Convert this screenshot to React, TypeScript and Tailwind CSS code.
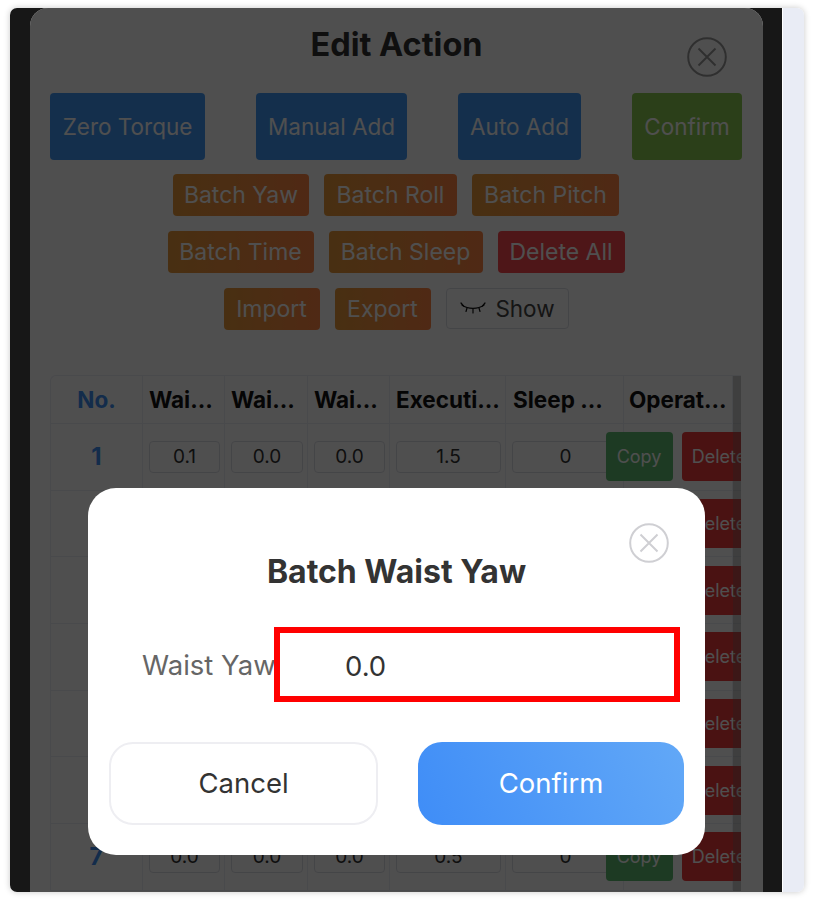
const font = { fontFamily: '"Inter", "Liberation Sans", sans-serif' };

const orange = "h-[42px] rounded-[4px] bg-gradient-to-r from-[#e8993a] to-[#ff8444] text-white text-[23px] leading-none whitespace-nowrap flex items-center justify-center pt-[1px]";
const blue = "h-[67px] rounded-[4px] bg-[#4298f5] text-white text-[22.5px] flex items-center justify-center pt-[1px]";

const rows = [
  ["0.1", "0.0", "0.0", "1.5", "0"],
  ["0.0", "0.0", "0.0", "0.5", "0"],
  ["0.0", "0.0", "0.0", "0.5", "0"],
  ["0.0", "0.0", "0.0", "0.5", "0"],
  ["0.0", "0.0", "0.0", "0.5", "0"],
  ["0.0", "0.0", "0.0", "0.5", "0"],
  ["0.0", "0.0", "0.0", "0.5", "0"],
];

const headers = ["Waist Yaw", "Waist Roll", "Waist Pitch", "Execution Time", "Sleep Time", "Operation"];
const gridCols = "grid grid-cols-[92px_82px_83px_82px_116px_118px_109px_8px]";

function CloseCircle({ color, size }: { color: string; size: number }) {
  return (
    <svg width={size} height={size} viewBox="0 0 40 40" fill="none" stroke={color} strokeWidth="2">
      <circle cx="20" cy="20" r="18.8" />
      <path d="M11.5 11.5 L28.5 28.5 M28.5 11.5 L11.5 28.5" />
    </svg>
  );
}

function EyeClosed() {
  return (
    <svg width="26" height="14" viewBox="0 0 26 14" fill="none" stroke="#111" strokeWidth="1.2" strokeLinecap="round">
      <path d="M2 3 C8 7.5 18 7.5 24 3" />
      <path d="M1 1 L3.5 4 M7 6 L6 9.5 M13 7 L13 11 M19 6 L20 9.5 M25 1 L22.5 4" />
    </svg>
  );
}

export default function App() {
  return (
    <div className="h-[900px] w-[814px] bg-white px-[10px] py-[8px] overflow-hidden" style={font}>
      <div className="h-[884px] flex rounded-[7px] overflow-hidden shadow-[0_0_6px_rgba(0,0,0,0.22)]">
        <div className="w-[772px] bg-[#171717] pl-[20px] pr-[19px]">
          <div className="relative h-[884px] bg-white rounded-t-[18px] overflow-hidden">
            <div className="pt-[17px] text-center text-[32.5px] leading-[40px] font-bold text-[#333]">Edit Action</div>

            <div className="absolute top-[29px] right-[36px]">
              <CloseCircle color="#999" size={40} />
            </div>

            <div className="mt-[28px] pl-[20px] pr-[21px] flex justify-between">
              <div className={`${blue} w-[155px]`}>Zero Torque</div>
              <div className={`${blue} w-[151px]`}>Manual Add</div>
              <div className={`${blue} w-[123px]`}>Auto Add</div>
              <div className="h-[67px] w-[110px] rounded-[4px] bg-[#8ccb50] text-white text-[22.5px] flex items-center justify-center pt-[1px]">Confirm</div>
            </div>

            <div className="mt-[14px] flex justify-center gap-[15px] pr-[1px]">
              <div className={`${orange} w-[136px]`}>Batch Yaw</div>
              <div className={`${orange} w-[133px]`}>Batch Roll</div>
              <div className={`${orange} w-[147px]`}>Batch Pitch</div>
            </div>
            <div className="mt-[15px] flex justify-center gap-[15px] pr-[1px]">
              <div className={`${orange} w-[146px]`}>Batch Time</div>
              <div className={`${orange} w-[154px]`}>Batch Sleep</div>
              <div className="h-[42px] w-[127px] rounded-[4px] bg-[#fb474d] text-white text-[23px] whitespace-nowrap flex items-center justify-center pt-[1px]">Delete All</div>
            </div>
            <div className="mt-[15px] flex justify-center gap-[15px] pr-[1px]">
              <div className={`${orange} w-[96px] h-[41px]`}>Import</div>
              <div className={`${orange} w-[96px] h-[41px]`}>Export</div>
              <div className="h-[41px] w-[123px] rounded-[4px] border border-[#dcdfe6] bg-white text-[#444] text-[22.5px] flex items-center justify-center gap-[9px] pt-[1px] pl-[1px]">
                <EyeClosed />
                <span>Show</span>
              </div>
            </div>

            <div className="relative mt-[45px] ml-[20px] w-[691px] border-t border-l border-[#ebeef5] rounded-tl-[6px] overflow-hidden">
              <div className={`${gridCols} h-[48px] border-b border-[#ebeef5] items-center text-[22.5px] font-bold text-[#111]`}>
                <div className="text-center text-[#3f8ff0] border-r border-[#ebeef5] h-full flex items-center justify-center pt-[1px]">No.</div>
                {headers.map((h, j) => (
                  <div key={h} className={`border-r border-[#ebeef5] h-full flex items-center pt-[1px] min-w-0 ${j === 5 ? "pl-[5px] pr-[3px]" : j === 4 ? "pl-[7px] pr-[9px]" : "pl-[6px] pr-[3px]"}`}>
                    <span className="truncate block w-full">{h}</span>
                  </div>
                ))}
                <div />
              </div>
              {rows.map((r, i) => (
                <div key={i} className={`${gridCols} h-[66.7px] border-b border-[#ebeef5] items-center`}>
                  <div className="h-full border-r border-[#ebeef5] flex items-center justify-center text-[24px] font-bold text-[#3f8ff0]">{i + 1}</div>
                  {r.map((v, j) => (
                    <div key={j} className="h-full border-r border-[#ebeef5] flex items-center pl-[6px] pr-[4px] min-w-0">
                      <input
                        readOnly
                        value={v}
                        className="w-full min-w-0 h-[32px] rounded-[4px] border border-[#dcdfe6] text-center text-[19px] text-[#333] bg-white outline-none"
                      />
                    </div>
                  ))}
                  <div className="h-full border-r border-[#ebeef5] flex items-center justify-center gap-[9px] pl-[6px]">
                    <div className="shrink-0 w-[67px] h-[49px] rounded-[4px] bg-[#5ebb71] text-white text-[18px] flex items-center justify-center">Copy</div>
                    <div className="shrink-0 w-[75px] h-[49px] rounded-[4px] bg-[#ef3a3a] text-white text-[18px] flex items-center justify-center">Delete</div>
                  </div>
                  <div />
                </div>
              ))}
              <div className="absolute top-0 right-0 bottom-0 w-[8px] bg-[#6e6e6e]/35" />
            </div>

            <div className="absolute inset-0 bg-black/[.69]" />

            <div className="absolute left-[58px] top-[480px] w-[617px] h-[367px] bg-white rounded-[28px] flex flex-col">
              <div className="absolute top-[35px] right-[36px]">
                <CloseCircle color="#cfcfd3" size={40} />
              </div>
              <div className="mt-[64px] text-center text-[32px] leading-[40px] font-bold text-[#333]">Batch Waist Yaw</div>
              <div className="mt-[35px] flex items-center pl-[54px]">
                <div className="w-[132px] text-[27.5px] text-[#666] leading-none whitespace-nowrap pt-[2px]">Waist Yaw</div>
                <input
                  readOnly
                  value="0.0"
                  className="w-[406px] h-[75px] border-[6px] border-[#ff0000] pl-[65px] pt-[3px] text-[27.5px] text-[#333] outline-none"
                />
              </div>
              <div className="mt-[40px] flex pl-[21px] gap-[40px]">
                <div className="w-[269px] h-[83px] rounded-[24px] border-2 border-[#eeeef2] flex items-center justify-center text-[27.5px] text-[#333] pt-[1px]">Cancel</div>
                <div className="w-[266px] h-[83px] rounded-[24px] bg-[linear-gradient(65deg,#3f8df7,#62a8f7)] flex items-center justify-center text-[27.5px] text-white pt-[1px]">Confirm</div>
              </div>
            </div>
          </div>
        </div>
        <div className="flex-1 border-l border-white bg-[#e9ecf5]" />
      </div>
    </div>
  );
}
